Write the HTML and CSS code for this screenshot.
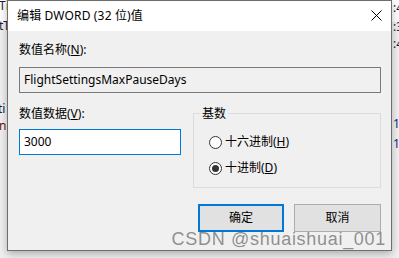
FILE: index.html
```html
<!DOCTYPE html>
<html lang="zh-CN">
<head>
<meta charset="utf-8">
<title>编辑 DWORD (32 位)值</title>
<link rel="stylesheet" href="styles.css">
</head>
<body>
<div class="desk">
  <div class="behind behind-left">
    <span class="frag f1">Ti</span>
    <span class="frag f2">tT</span>
    <span class="frag f3">ti</span>
    <span class="frag f4 red">n</span>
  </div>
  <div class="behind behind-right">
    <span class="frag r1">:4</span>
    <span class="frag r2">:3</span>
    <span class="frag r3">:4</span>
    <span class="frag r4">15</span>
    <span class="frag r5">16</span>
  </div>

  <div class="dialog">
    <div class="titlebar">
      <span class="title">编辑 DWORD (32 位)值</span>
      <svg class="close" width="11" height="11" viewBox="0 0 11 11"><path d="M0.5 0.5 L10.5 10.5 M10.5 0.5 L0.5 10.5" stroke="#000" stroke-width="1" fill="none"/></svg>
    </div>
    <div class="body">
      <div class="label l1">数值名称(<u>N</u>):</div>
      <div class="field readonly">FlightSettingsMaxPauseDays</div>
      <div class="row">
        <div class="col">
          <div class="label l2">数值数据(<u>V</u>):</div>
          <div class="field active">3000</div>
        </div>
        <div class="group">
          <div class="legend">基数</div>
          <div class="radio first"><span class="circle"></span><span>十六进制(<u>H</u>)</span></div>
          <div class="radio"><span class="circle checked"></span><span>十进制(<u>D</u>)</span></div>
        </div>
      </div>
      <div class="buttons">
        <div class="btn default">确定</div>
        <div class="btn">取消</div>
      </div>
    </div>
  </div>

  <div class="watermark">CSDN @shuaishuai_001</div>
</div>
</body>
</html>
```

FILE: styles.css
```css
html, body {
  margin: 0;
  padding: 0;
}
body {
  width: 399px;
  height: 258px;
  overflow: hidden;
  background: #f0f0f0;
  font-family: "Noto Sans", "Noto Sans CJK SC", sans-serif;
  font-size: 12px;
  color: #000;
}
.desk {
  position: relative;
  width: 399px;
  height: 258px;
  background: linear-gradient(#ffffff 0, #ffffff 22px, #f0f0f0 22px);
}
.behind {
  position: absolute;
  top: 0;
  height: 258px;
  overflow: hidden;
  font-family: "Noto Sans", sans-serif;
  font-size: 12px;
  color: #1a1a40;
}
.behind-left { left: 0; width: 7px; }
.behind-right { left: 392px; width: 7px; }
.frag {
  position: absolute;
  line-height: 12px;
  white-space: nowrap;
}
.red { color: #6b1010; }
.f1 { left: -1px; top: 0; }
.f2 { left: -1px; top: 20px; }
.f3 { left: -2px; top: 103px; }
.f4 { left: -1px; top: 120px; }
.r1 { left: 1px; top: 2px; }
.r2 { left: 1px; top: 21px; }
.r3 { left: 1px; top: 38px; }
.r4 { left: 1px; top: 118px; color: #0a2a8a; }
.r5 { left: 1px; top: 138px; color: #0a2a8a; }

.dialog {
  position: absolute;
  left: 7px;
  top: 0;
  width: 383px;
  height: 249px;
  border: 1px solid #6e6e6e;
  background: #f0f0f0;
  box-shadow: 0 3px 8px rgba(0, 0, 0, 0.28);
  display: flex;
  flex-direction: column;
}
.titlebar {
  height: 30px;
  flex: none;
  background: #ffffff;
  display: flex;
  align-items: center;
  justify-content: space-between;
  padding: 0 9px 0 9px;
}
.title {
  font-size: 12px;
  line-height: 16px;
  letter-spacing: 0.15px;
}
.close {
  display: block;
  margin-top: -1px;
}
.body {
  padding: 11px 10px 0 11px;
  display: flex;
  flex-direction: column;
}
.label {
  line-height: 16px;
  height: 16px;
}
.field {
  height: 24px;
  line-height: 24px;
  padding: 0 4px;
  border: 1px solid #7a7a7a;
  white-space: nowrap;
}
.readonly {
  margin-top: 9px;
  background: #f0f0f0;
}
.row {
  display: flex;
  align-items: flex-start;
  gap: 12px;
  margin-top: 13px;
}
.col {
  width: 162px;
  flex: none;
  display: flex;
  flex-direction: column;
}
.active {
  margin-top: 7px;
  background: #ffffff;
  border-color: #0078d7;
}
.group {
  flex: 1;
  margin-top: 7px;
  height: 73px;
  border: 1px solid #dcdcdc;
  padding: 0 0 0 15px;
  display: flex;
  flex-direction: column;
}
.legend {
  align-self: flex-start;
  margin: -8px 0 0 -9px;
  padding: 0 2px 0 2px;
  background: #f0f0f0;
  line-height: 16px;
}
.radio {
  display: flex;
  align-items: center;
  gap: 3px;
  line-height: 16px;
  margin-top: 10px;
}
.radio.first {
  margin-top: 12px;
}
.circle {
  width: 11px;
  height: 11px;
  border: 1px solid #333333;
  border-radius: 50%;
  background: #ffffff;
  display: flex;
  align-items: center;
  justify-content: center;
  flex: none;
}
.circle.checked::after {
  content: "";
  width: 7px;
  height: 7px;
  border-radius: 50%;
  background: #333333;
}
.buttons {
  display: flex;
  justify-content: flex-end;
  gap: 10px;
  margin-top: 16px;
}
.btn {
  width: 85px;
  height: 26px;
  line-height: 26px;
  text-align: center;
  background: #e1e1e1;
  border: 1px solid #adadad;
}
.btn.default {
  width: 82px;
  height: 24px;
  line-height: 24px;
  border: 2px solid #0078d7;
}
.watermark {
  position: absolute;
  right: 13px;
  top: 230px;
  font-family: "Liberation Sans", Arial, sans-serif;
  font-size: 18px;
  line-height: 18px;
  letter-spacing: 0.7px;
  color: rgba(110, 110, 110, 0.75);
  white-space: nowrap;
}
```
